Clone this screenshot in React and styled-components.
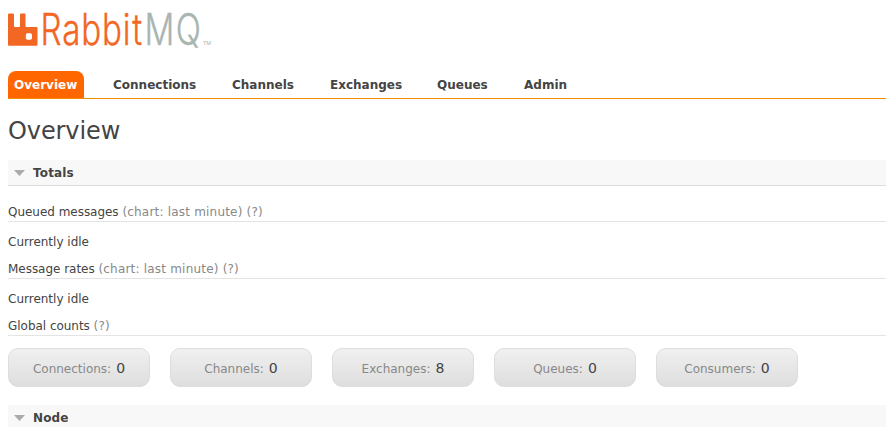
import React from "react";
import styled, { createGlobalStyle } from "styled-components";

const GlobalStyle = createGlobalStyle`
  html, body { margin: 0; background: #fff; overflow: hidden; }
  body {
    font: 12px/17px Verdana, "DejaVu Sans", sans-serif;
    color: #444;
  }
`;

const Page = styled.div`
  display: flex;
  flex-direction: column;
  height: 427px;
  padding-left: 8px;
  box-sizing: border-box;
  overflow: hidden;
`;

const Logo = styled.svg`
  display: block;
  flex: none;
  width: 212px;
  height: 71px;
`;

const Wordmark = styled.g`
  font-family: Inter, sans-serif;
  font-size: 43px;
  font-weight: 300;
`;

const Tabs = styled.nav`
  display: flex;
  flex: none;
  gap: 23px;
  height: 27px;
  border-bottom: 1px solid #f88c00;
`;

const Tab = styled.a`
  box-sizing: border-box;
  width: ${(p) => p.$width}px;
  padding-left: 6px;
  border-radius: 8px 8px 0 0;
  background: ${(p) => (p.$active ? "#f60" : "transparent")};
  color: ${(p) => (p.$active ? "#fff" : "#444")};
  font-weight: bold;
  line-height: 28px;
  white-space: nowrap;
`;

const Title = styled.h1`
  flex: none;
  margin: 18px 0 14px;
  font-size: 24px;
  font-weight: normal;
  line-height: 29px;
  letter-spacing: -0.1px;
`;

const SectionHeader = styled.h2`
  display: flex;
  flex: none;
  align-items: center;
  gap: 8px;
  box-sizing: border-box;
  height: 26px;
  margin: 0;
  padding-left: 6px;
  border-bottom: 1px solid #ddd;
  background: #f8f8f8;
  font-size: 12px;
  font-weight: bold;
  line-height: 25px;
`;

const SectionLabel = styled.span`
  padding-top: 1px;
  letter-spacing: 0.15px;
`;

const Arrow = styled.svg`
  width: 11px;
  height: 6px;
`;

const SubHeader = styled.h3`
  flex: none;
  box-sizing: border-box;
  height: 19px;
  margin: ${(p) => p.$top}px 0 0;
  border-bottom: 1px solid #e4e4e4;
  font-size: 12px;
  font-weight: normal;
  line-height: 18px;
  letter-spacing: -0.03px;
`;

const Muted = styled.span`
  color: #888;
  letter-spacing: 0.2px;
`;

const Status = styled.p`
  flex: none;
  height: 17px;
  margin: 12px 0 0;
`;

const Counts = styled.div`
  display: flex;
  flex: none;
  gap: 20px;
  margin: 12px 0 18px;
`;

const Count = styled.div`
  display: flex;
  justify-content: center;
  align-items: center;
  gap: 5px;
  box-sizing: border-box;
  width: 142px;
  height: 39px;
  padding-top: 3px;
  border: 1px solid #ddd;
  border-radius: 10px;
  background: linear-gradient(#f0f0f0, #dedede);
  color: #888;
`;

const Value = styled.span`
  margin-top: -1px;
  color: #444;
  font-size: 14px;
`;

const tabs = [
  { label: "Overview", width: 76, active: true },
  { label: "Connections", width: 96 },
  { label: "Channels", width: 75 },
  { label: "Exchanges", width: 84 },
  { label: "Queues", width: 64 },
  { label: "Admin", width: 60 },
];

const counts = [
  ["Connections", 0],
  ["Channels", 0],
  ["Exchanges", 8],
  ["Queues", 0],
  ["Consumers", 0],
];

const CONDENSE = 0.77;
const condensed = (xs) => xs.map((x) => (x / CONDENSE).toFixed(2)).join(" ");

function Section({ title }) {
  return (
    <SectionHeader>
      <Arrow viewBox="0 0 11 6"><path d="M0 0H11L5.5 6Z" fill="#aaa" /></Arrow>
      <SectionLabel>{title}</SectionLabel>
    </SectionHeader>
  );
}

export default function App() {
  return (
    <>
      <GlobalStyle />
      <Page>
        <Logo viewBox="8 0 212 71" role="img" aria-label="RabbitMQ">
          <path
            fill="#f26724"
            fillRule="evenodd"
            d="M9 13.500h3.500q1.500 0 1.500 1V26q0 1 1 1H19q1 0 1-1V14.500q0-1 1-1H24.500q1 0 1 1V26q0 1 1 1H36.500q1 0 1 1V44.700q0 1-1 1H9q-1 0-1-1V14.500q0-1 1-1ZM27.500 33.300q-1.700 0-1.700 1.600v3.100q0 1.700 1.700 1.700h2.800q1.700 0 1.700-1.700v-3.100q0-1.600-1.700-1.600Z"
          />
          <Wordmark transform={`scale(${CONDENSE} 1)`}>
            <text x={condensed([40.6, 62.2, 81.2, 102, 122.8, 132.3])} y="45" fill="#f26724" stroke="#f26724" strokeWidth="0.4">Rabbit</text>
            <text x={condensed([144.6, 175.8])} y="45" fill="#a9b5b0" stroke="#a9b5b0" strokeWidth="0.4">MQ</text>
          </Wordmark>
          <text x="203" y="45" fill="#a9b5b0" fontFamily="Roboto, sans-serif" fontSize="6" textLength="8" lengthAdjust="spacingAndGlyphs">TM</text>
        </Logo>
        <Tabs>
          {tabs.map((t) => (
            <Tab key={t.label} $active={t.active} $width={t.width}>{t.label}</Tab>
          ))}
        </Tabs>
        <Title>Overview</Title>
        <Section title="Totals" />
        <SubHeader $top={17}>Queued messages <Muted>(chart: last minute) (?)</Muted></SubHeader>
        <Status>Currently idle</Status>
        <SubHeader $top={9}>Message rates <Muted>(chart: last minute) (?)</Muted></SubHeader>
        <Status>Currently idle</Status>
        <SubHeader $top={9}>Global counts <Muted>(?)</Muted></SubHeader>
        <Counts>
          {counts.map(([label, value]) => (
            <Count key={label}>{label}: <Value>{value}</Value></Count>
          ))}
        </Counts>
        <Section title="Node" />
      </Page>
    </>
  );
}
